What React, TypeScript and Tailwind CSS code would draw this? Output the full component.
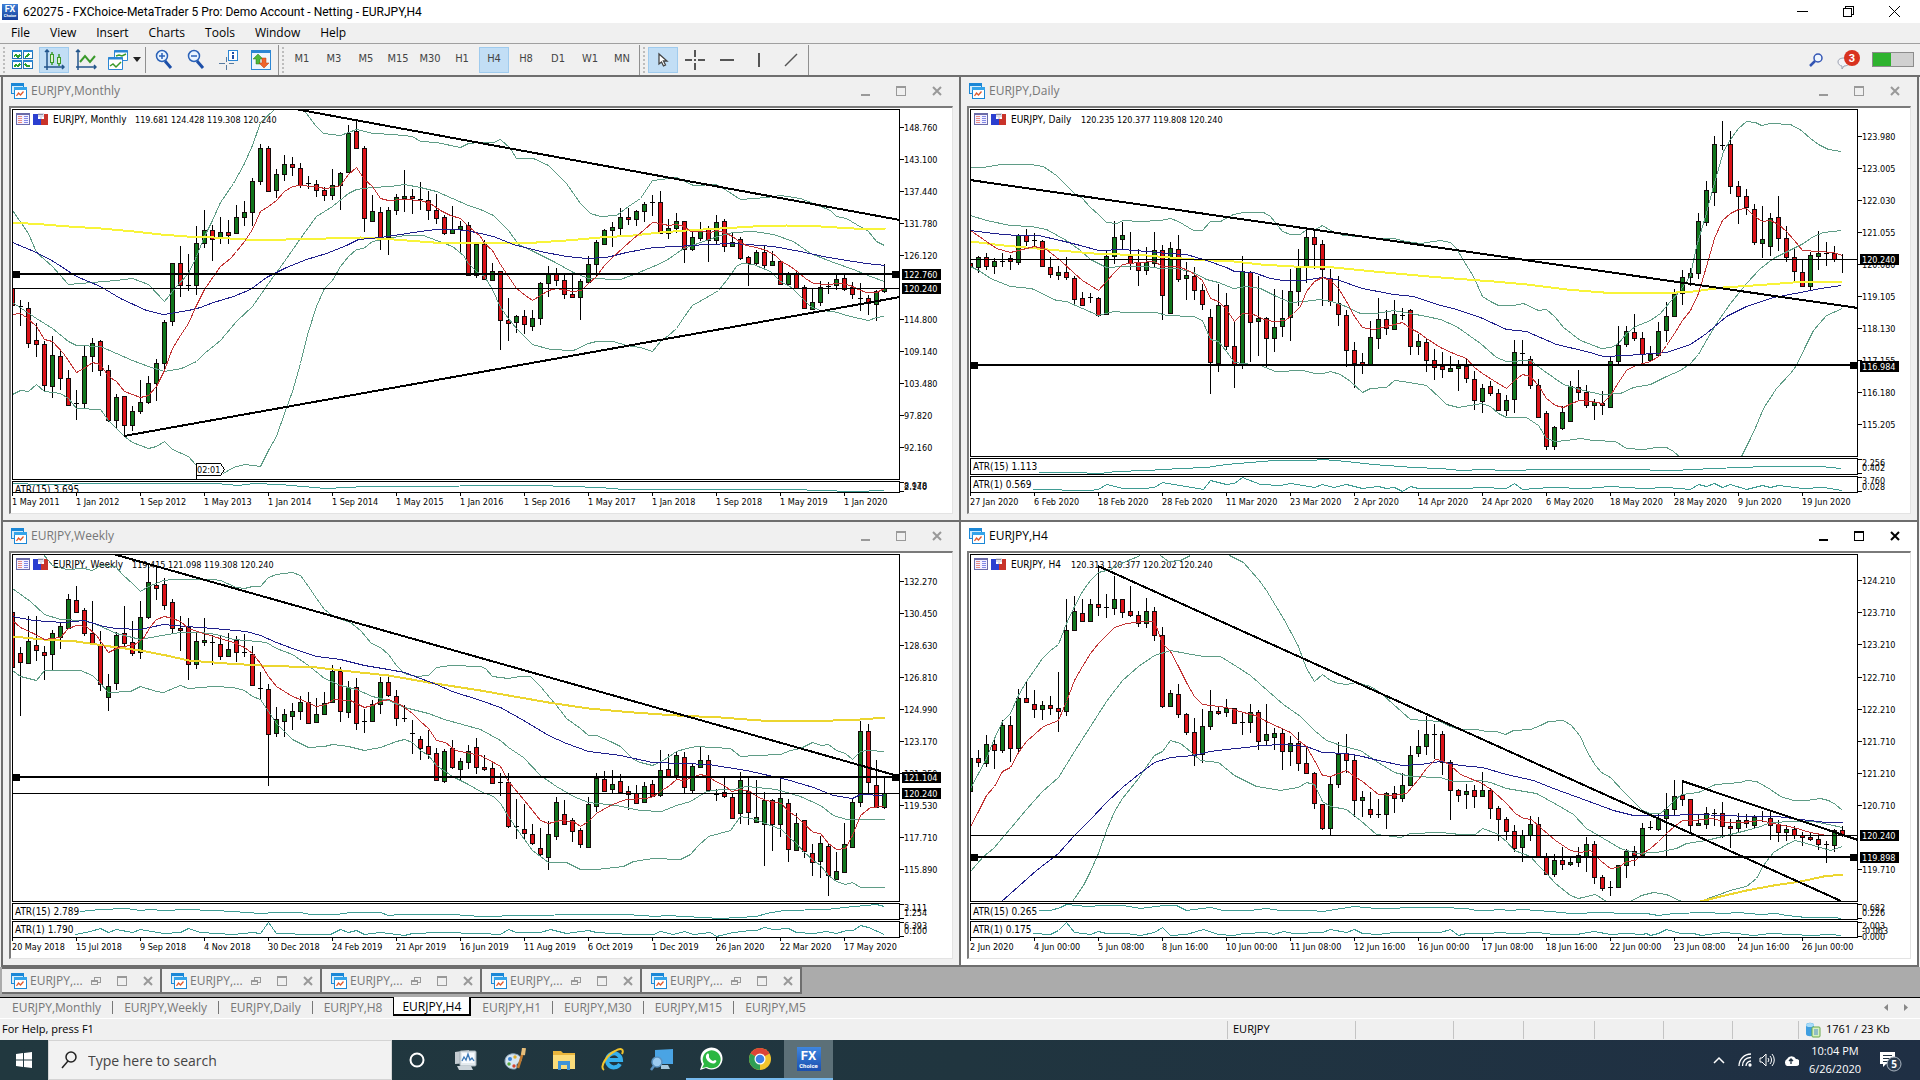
import React from "react";

type ChartSpec = {
  title: string;
  symbol: string;
  quote: string;
  quoteX: number;
  active?: boolean;
  ox: number;
  oy: number;
  candles: string;
  lines: { color: string; width: number; d: string[] }[];
  trends: [number, number, number, number][];
  thick: number;
  thin: number;
  plotBottom: number;
  panels: { top: number; bottom: number; label: string; d: string; values: [string, number][] }[];
  firstTick: number;
  prices: [string, number][];
  tags: [string, number][];
  dates: string[];
  timer?: string;
};

const GREEN = "#5f9c86";
const RED = "#c23434";
const BLUE = "#20208c";
const YELLOW = "#f8f43a";
const GOLD = "#ecd630";
const TEAL = "#3f9c94";

const monthly: ChartSpec = {
  title: "EURJPY,Monthly",
  symbol: "EURJPY, Monthly",
  quote: "119.681 124.428 119.308 120.240",
  quoteX: 124,
  ox: 11,
  oy: 28,
  candles: `626,626,676,676r 662,678,685,740d 667,685,790,806r 730,781,793,833r 783,793,916,938r 770,826,919,956g 812,829,895,930r 872,895,976,980r
  930,970,972,1020d 800,829,970,984g 774,790,829,876g 781,785,870,890r 857,871,1021,1028r 942,952,1021,1046g 949,949,1036,1066r 980,994,1036,1055g
  902,967,994,1004g 890,910,967,974g 838,850,910,965g 720,727,850,868g 550,550,724,740g 499,550,616,653r 524,616,619,634d 440,490,616,647g
  392,451,490,504g 436,451,478,545r 412,457,472,494g 420,457,466,492r 376,412,460,463g 365,397,412,440g 295,304,397,440g 193,205,304,317g
  200,205,334,334r 268,283,331,356g 226,253,283,304g 232,253,262,290r 250,265,316,325r 290,310,313,328d 302,314,331,352r 322,331,346,364r
  268,316,346,362g 277,280,316,391g 136,160,277,280g 122,154,205,208r 198,205,415,458r 345,394,424,426g 382,397,475,512r 382,391,472,526g
  342,352,391,406g 270,349,354,398g 328,349,356,403r 306,357,360,390d 334,361,391,422r 342,391,415,434r 406,412,460,466r 380,448,460,464g
  425,439,447,524g 427,436,586,590r 488,493,586,596g 480,493,598,600r 550,574,601,605g 574,574,721,812r 655,721,730,785r 706,710,727,760g
  690,710,733,764r 692,715,739,755g 606,610,715,737g 558,583,610,652g 565,583,601,620r 580,601,643,658r 583,643,652,655r 598,604,652,720g
  530,553,607,610g 481,487,553,590g 448,451,493,494g 428,442,451,503g 384,412,445,472g 385,412,418,437r 392,395,418,440g 367,374,394,426g
  347,367,370,410d 333,367,460,462r 418,445,460,478g 400,424,445,460g 424,424,508,550r 458,472,508,514g 427,448,475,484g 440,448,482,548r
  406,427,481,496g 418,424,499,517r 460,487,499,502g 473,478,536,540r 530,532,550,620r 511,517,550,560g 500,517,556,566r 514,544,556,560g
  540,544,613,614r 577,580,613,616g 577,583,625,628r 616,622,685,688r 628,667,688,692g 604,622,667,680g 607,619,622,643d 586,598,616,632g
  586,595,628,634r 608,622,643,658r 610,654,656,695d 647,655,670,706r 631,634,673,724g 552,626,635,640g`,
  lines: [
    {
      color: GREEN,
      width: 1,
      d: [
        "38,390 85,460 109,517 157,560 205,612 277,607 349,601 397,595 445,612 493,663 530,620 565,580 590,530 613,470 637,420 661,368 700,310 733,250 757,195 781,128 822,89",
        "910,89 945,135 970,160 1021,166 1069,148 1120,160 1180,164 1237,168 1261,184 1310,186 1381,202 1405,190 1440,188 1480,186 1501,178 1530,205 1550,235 1600,236 1645,255 1700,310 1740,370 1770,400 1800,409 1850,405 1885,380 1920,355 1957,302 1985,298 2030,292 2080,316 2150,313 2180,330 2220,357 2300,352 2340,346 2400,354 2440,370 2490,390 2510,410 2540,415 2570,432 2605,453 2630,485 2653,495",
        "38,668 109,716 157,745 205,785 229,796 300,798 349,820 397,842 445,860 493,873 545,865 590,843 613,820 661,780 709,725 757,680 805,610 853,545 901,475 950,410 997,380 1045,340 1069,328 1117,322 1170,320 1213,313 1260,322 1309,335 1357,355 1405,375 1440,387 1480,405 1525,450 1555,492 1600,515 1660,545 1720,578 1765,595 1860,597 1910,580 1960,560 2000,540 2050,505 2120,480 2160,467 2200,456 2260,453 2320,462 2380,485 2430,520 2500,548 2560,568 2610,590 2653,605",
        "38,942 61,930 85,935 109,913 133,933 181,941 205,956 229,985 300,988 325,1022 373,1070 397,1087 445,1105 470,1098 493,1083 517,1107 565,1130 590,1155",
        "670,1180 700,1162 733,1153 781,1160 805,1110 829,1070 853,1000 877,935 901,850 925,755 949,680 973,625 997,602 1021,560 1045,528 1069,508 1090,504 1117,485 1165,475 1213,465 1270,466 1309,480 1357,500 1390,525 1405,550 1430,575 1453,590 1478,627 1501,682 1525,715 1550,745 1597,793 1650,808 1720,811 1765,790 1790,784 1840,785 1880,797 1920,803 1957,815 1981,785 2005,765 2029,745 2053,710 2078,675 2125,650 2155,632 2180,600 2210,560 2225,550 2260,552 2310,575 2340,605 2375,622 2400,650 2430,680 2460,690 2500,695 2550,710 2605,721 2630,712 2653,708",
      ],
    },
    {
      color: YELLOW,
      width: 2,
      d: ["38,428 130,433 205,440 300,445 400,455 480,464 560,468 640,472 740,478 860,478 980,474 1080,473 1180,478 1300,486 1440,486 1610,486 1700,480 1800,473 1900,465 1980,457 2060,451 2160,445 2260,439 2360,437 2460,439 2560,446 2655,447"],
    },
    {
      color: BLUE,
      width: 1,
      d: ["38,487 110,517 160,545 230,588 300,618 360,655 440,692 490,703 530,697 565,692 600,682 640,668 700,650 750,627 800,593 860,562 920,538 980,521 1040,495 1075,478 1140,472 1200,464 1260,453 1310,448 1360,448 1400,452 1440,460 1480,468 1540,492 1620,515 1700,530 1760,536 1820,532 1880,518 1960,503 2030,498 2120,493 2200,490 2320,500 2400,514 2470,528 2540,542 2600,550 2655,557"],
    },
    {
      color: RED,
      width: 1,
      d: ["38,703 60,700 80,712 110,740 133,777 157,785 190,820 229,876 255,862 277,848 300,852 325,890 349,905 373,935 421,952 445,945 470,920 493,870 517,805 541,765 565,730 590,675 613,628 640,590 661,560 690,535 709,515 733,485 757,447 781,395 805,379 829,360 853,335 877,320 900,316 940,318 975,326 1000,322 1021,315 1045,283 1069,262 1093,298 1117,320 1141,355 1165,361 1213,358 1261,360 1290,370 1320,392 1350,406 1381,415 1405,440 1440,470 1453,490 1478,512 1500,552 1525,590 1550,625 1575,647 1597,660 1620,645 1645,630 1669,626 1695,632 1720,635 1745,630 1765,610 1790,590 1813,555 1840,530 1870,502 1900,475 1930,450 1957,427 1981,431 2005,437 2030,432 2053,438 2070,455 2100,455 2130,457 2150,452 2173,458 2197,468 2221,487 2240,495 2270,503 2300,512 2325,525 2345,545 2370,560 2395,578 2415,595 2440,610 2480,612 2520,609 2550,615 2575,628 2600,638 2630,636 2653,625"],
    },
  ],
  trends: [
    [885, 89, 2699, 420],
    [373, 1068, 2699, 653],
  ],
  thick: 582,
  thin: 625,
  plotBottom: 1198,
  panels: [
    {
      top: 1205,
      bottom: 1238,
      label: "ATR(15) 3.695",
      d: "38,1210 130,1212 300,1211 650,1209 715,1215 760,1210 840,1213 975,1225 1100,1219 1270,1218 1490,1217 1610,1217 1800,1222 1870,1227 2380,1228 2460,1231 2560,1235 2653,1231",
      values: [["8.978", 1218], ["2.140", 1221]],
    },
  ],
  firstTick: 37,
  prices: [["148.760", 142], ["143.100", 238], ["137.440", 334], ["131.780", 430], ["126.120", 526], ["114.800", 718], ["109.140", 814], ["103.480", 910], ["97.820", 1006], ["92.160", 1102]],
  tags: [["122.760", 583], ["120.240", 626]],
  dates: ["1 May 2011", "1 Jan 2012", "1 Sep 2012", "1 May 2013", "1 Jan 2014", "1 Sep 2014", "1 May 2015", "1 Jan 2016", "1 Sep 2016", "1 May 2017", "1 Jan 2018", "1 Sep 2018", "1 May 2019", "1 Jan 2020"],
  timer: "02:01",
};

const daily: ChartSpec = {
  title: "EURJPY,Daily",
  symbol: "EURJPY, Daily",
  quote: "120.235 120.377 119.808 120.240",
  quoteX: 112,
  ox: 9,
  oy: 28,
  candles: `550,550,562,562r 529,532,562,580g 520,532,559,572r 535,544,559,584g 520,544,546,562d 525,535,545,570r 463,466,547,556g 448,466,484,498r
  460,482,484,498d 480,484,559,562r 532,562,584,594r 560,577,586,602g 532,577,592,600r 588,595,658,674r 636,655,676,679r 640,653,655,670d
  652,655,706,712r 514,529,703,707g 424,472,529,553g 427,466,479,512g 457,529,550,572r 508,547,571,620r 503,547,571,587g 457,511,550,566g
  497,511,646,722r 487,505,700,703g 466,508,598,608r 547,586,596,660g 562,589,631,662r 614,631,673,690r 688,712,847,944r 612,676,850,878g
  640,676,799,811r 724,799,855,926r 529,574,856,868g 574,578,727,846r 590,715,724,830g 712,715,775,866r 628,742,775,818g 630,715,740,772g
  568,634,712,785g 508,560,634,680g 452,472,560,610g 455,472,494,568r 480,493,568,680r 568,595,664,680r 590,670,704,740r 690,706,811,862r
  787,811,850,924r 820,847,853,884r 724,772,856,858g 655,718,775,808g 690,718,745,767r 660,703,749,752g 685,706,708,721d 688,691,799,827r
  762,784,799,827g 775,787,841,878r 808,841,862,902r 817,859,868,894r 829,865,874,875g 841,859,865,935g 835,859,895,910r 875,898,961,991r
  912,925,964,1000g 903,919,940,950r 928,940,991,994r 946,961,991,1010g 780,817,958,1000g 780,820,822,856d 829,838,916,928r 898,916,1012,1014r
  994,1000,1099,1111r 1039,1042,1099,1111g 980,997,1045,1052g 905,919,1024,1027g 870,922,937,960r 915,937,976,986r 958,968,976,1022g 935,970,976,1007r
  830,844,982,984g 738,796,844,856g 738,754,793,802g 704,757,775,785r 758,775,823,856r 800,824,840,848g 726,754,826,830g 667,709,751,788g
  628,643,709,713g 570,592,640,675g 565,580,593,618g 400,424,580,598g 304,331,427,438g 169,193,338,380g 123,196,198,212d 153,193,319,344r
  304,319,349,432r 328,349,382,407r 373,388,487,497r 380,478,490,536g 400,415,500,530g 350,412,475,515r 438,475,532,548r 507,532,574,603r
  541,577,619,623r 517,526,619,630g 453,519,529,572g 487,520,521,560d 498,521,538,548r 524,537,539,580d`,
  lines: [
    {
      color: GREEN,
      width: 1,
      d: [
        "31,262 70,261 120,253 210,253 250,260 290,285 320,315 343,340 367,355 391,382 415,402 439,428 470,430 490,421 540,423 600,421 631,415 655,425 700,450 727,450 751,425 780,424 820,402 850,397 910,397 930,410 967,455 991,463 1020,463 1040,447 1065,448 1087,436 1111,452 1150,465 1200,468 1240,474 1300,476 1340,485 1380,490 1440,482 1470,488 1490,505 1510,540 1540,590 1567,648 1590,665 1615,676 1660,675 1690,670 1735,690 1760,687 1785,712 1810,742 1860,780 1925,805 1955,802 1975,790 2000,760 2025,738 2071,722 2100,700 2130,665 2160,630 2190,585 2210,500 2235,410 2260,320 2290,215 2310,178 2335,145 2360,123 2385,127 2405,136 2430,131 2490,132 2525,150 2550,175 2575,192 2605,208 2645,213",
        "31,405 80,422 150,435 215,438 260,448 320,480 360,510 391,538 439,562 490,560 560,560 600,566 650,565 700,577 740,597 775,607 820,625 860,620 900,625 950,650 990,666 1030,663 1080,657 1115,663 1150,675 1200,700 1250,700 1300,692 1350,700 1400,708 1440,718 1490,740 1560,790 1610,832 1640,845 1710,842 1750,870 1810,912 1870,930 1925,942 1980,940 2020,922 2071,912 2120,888 2160,870 2190,850 2215,822 2240,780 2270,730 2310,670 2360,610 2400,565 2440,535 2500,505 2530,490 2560,470 2590,458 2645,451",
        "31,560 60,575 90,595 151,619 215,625 290,660 319,664 367,685 415,706 460,695 500,698 590,697 620,707 700,710 727,722 751,777 775,785 799,815 823,848 900,856 945,874 1030,872 1063,880 1090,880 1111,873 1140,882 1170,905 1207,937 1230,925 1280,922 1303,901 1330,903 1399,917 1440,954 1460,972 1495,982 1530,975 1565,970 1590,980 1615,1000 1640,1013 1700,1013 1735,1035 1760,1075 1785,1085 1820,1080 1860,1075 1900,1080 1965,1085 2000,1105 2050,1108 2090,1103 2120,1103 2140,1115 2157,1129",
        "2344,1129 2370,1075 2390,1035 2410,985 2450,925 2490,880 2510,855 2535,800 2560,750 2600,705 2647,684",
      ],
    },
    {
      color: YELLOW,
      width: 2,
      d: ["31,485 130,497 230,505 400,520 560,527 700,538 820,545 900,553 1000,558 1120,563 1240,575 1440,592 1600,605 1700,613 1820,628 1930,636 2150,637 2200,633 2290,623 2380,615 2500,608 2647,605"],
    },
    {
      color: BLUE,
      width: 1,
      d: ["31,450 100,460 170,467 235,466 300,480 360,497 415,511 490,509 560,515 620,520 680,522 740,540 800,562 823,575 880,577 930,596 970,602 1030,602 1087,592 1130,597 1207,625 1300,642 1360,648 1440,676 1480,685 1560,712 1640,748 1700,753 1790,793 1880,815 1930,830 2000,826 2120,818 2190,793 2240,760 2300,708 2360,680 2440,652 2520,638 2580,626 2645,615"],
    },
    {
      color: RED,
      width: 1,
      d: ["31,450 79,484 110,505 151,518 199,505 223,498 260,507 300,540 343,580 367,600 415,630 439,603 463,577 487,553 535,547 583,545 607,560 655,560 690,575 727,602 751,655 775,663 799,687 823,725 847,700 880,702 920,720 945,724 975,720 1000,700 1020,680 1040,635 1063,603 1087,593 1111,600 1135,625 1159,665 1183,710 1207,742 1240,747 1279,740 1327,728 1351,745 1375,757 1399,775 1440,803 1480,820 1520,835 1543,862 1567,880 1600,900 1640,925 1663,900 1688,883 1711,888 1735,915 1759,955 1785,975 1810,982 1835,970 1859,960 1890,965 1927,970 1950,945 1975,908 2000,872 2025,855 2071,845 2095,830 2119,797 2143,760 2167,720 2191,690 2215,640 2240,560 2263,475 2287,420 2311,400 2335,387 2359,385 2383,408 2407,424 2431,422 2455,432 2479,455 2503,482 2527,510 2575,515 2620,517 2647,525"],
    },
  ],
  trends: [[31, 302, 2692, 684]],
  thick: 857,
  thin: 538,
  plotBottom: 1129,
  panels: [
    {
      top: 1136,
      bottom: 1183,
      label: "ATR(15) 1.113",
      d: "235,1178 340,1178 420,1181 470,1175 560,1172 660,1164 740,1161 800,1152 870,1146 940,1141 1050,1141 1090,1138 1160,1144 1240,1153 1360,1161 1440,1165 1500,1170 1570,1167 1640,1171 1760,1168 2000,1168 2140,1170 2260,1165 2420,1160 2580,1160 2645,1165",
      values: [["2.256", 1149], ["0.402", 1166]],
    },
    {
      top: 1190,
      bottom: 1238,
      label: "ATR(1) 0.569",
      d: "220,1228 390,1231 415,1228 439,1213 490,1224 550,1226 583,1222 607,1207 640,1213 730,1227 751,1200 800,1213 823,1209 847,1192 900,1212 960,1217 991,1210 1063,1222 1087,1213 1120,1221 1159,1213 1207,1226 1255,1219 1279,1226 1303,1223 1327,1234 1351,1219 1375,1226 1440,1226 1520,1226 1560,1222 1640,1226 1663,1211 1687,1227 1770,1222 1880,1224 1950,1219 2050,1226 2120,1222 2190,1228 2215,1214 2240,1218 2263,1211 2287,1223 2311,1213 2359,1227 2407,1217 2431,1221 2455,1216 2530,1225 2590,1222 2647,1231",
      values: [["3.760", 1203], ["0.028", 1221]],
    },
  ],
  firstTick: 31,
  prices: [["123.980", 169], ["123.005", 265], ["122.030", 361], ["121.055", 457], ["120.080", 553], ["119.105", 649], ["118.130", 745], ["117.155", 841], ["116.180", 937], ["115.205", 1033]],
  tags: [["120.240", 538], ["116.984", 859]],
  dates: ["27 Jan 2020", "6 Feb 2020", "18 Feb 2020", "28 Feb 2020", "11 Mar 2020", "23 Mar 2020", "2 Apr 2020", "14 Apr 2020", "24 Apr 2020", "6 May 2020", "18 May 2020", "28 May 2020", "9 Jun 2020", "19 Jun 2020"],
};

const weekly: ChartSpec = {
  title: "EURJPY,Weekly",
  symbol: "EURJPY, Weekly",
  quote: "119.415 121.098 119.308 120.240",
  quoteX: 121,
  ox: 11,
  oy: 33,
  candles: `278,278,442,445r 382,400,427,590r 288,364,430,434g 288,376,391,424r 380,397,406,482r 332,340,403,455g 310,319,352,388g 222,238,325,328g
  198,241,277,278r 264,271,340,350r 244,340,373,376r 335,373,493,515r 462,499,532,575g 337,346,490,512g 258,340,370,380r 304,367,400,410r
  243,292,397,418g 130,187,292,298g 140,196,205,242r 175,193,256,272r 238,247,325,344r 289,325,331,395r 294,322,433,482r 337,364,433,448g
  295,361,367,380g 346,367,370,436d 350,373,409,420r 340,388,409,412g 348,361,397,427r 343,398,400,412d 380,403,496,496r 457,506,508,538d
  492,508,643,800r 562,598,640,653g 568,583,604,653g 550,574,589,632g 529,547,574,602g 516,547,610,612r 535,583,607,610g 517,550,583,586g
  436,454,547,550g 442,454,574,608r 484,502,577,596g 474,502,610,632r 568,604,606,641d 540,553,604,606g 472,487,553,582g 472,487,526,532r
  510,529,595,618r 556,596,598,608d 602,640,642,702d 650,658,685,722r 632,679,703,718r 684,700,781,785r 688,694,784,790g 662,685,742,748r
  716,724,748,782g 676,694,727,748g 655,682,742,762r 707,742,748,754r 730,745,790,792r 760,788,790,830d 760,787,919,924r 838,920,922,957d
  852,928,940,962r 912,943,970,977r 926,985,1003,1012r 903,943,1012,1050g 832,847,949,962g 840,883,913,916r 894,901,934,968r 925,931,973,986r
  832,853,982,986g 760,775,859,878g 754,778,814,816r 752,793,808,820g 762,784,818,824r 800,814,823,872r 796,820,850,853r 788,799,847,850g
  780,793,829,833r 690,751,826,832g 704,748,770,772r 698,706,766,778g 698,712,802,824r 730,739,811,822g 682,721,742,744g 706,721,811,814r
  808,822,825,845d 772,817,829,835r 820,832,895,898r 757,781,880,914g 770,814,877,916r 780,892,907,910g 817,841,913,1038g 838,841,913,995r
  772,835,913,952g 838,850,988,1026r 880,910,991,994g 900,901,994,1014r 974,1000,1027,1068r 950,970,1024,1075g 974,979,1066,1128r 998,1054,1078,1082g
  910,973,1057,1058g 834,847,982,986g 604,634,847,862g 614,634,787,821r 720,796,862,865r 772,821,862,869g`,
  lines: [
    {
      color: GREEN,
      width: 1,
      d: [
        "130,103 157,135 200,147 250,146 277,150 300,137 345,140 370,165 397,190 421,215 445,198 490,180 517,177 565,178 640,178 662,180 709,202 733,206 757,199 781,198 805,173 830,163 877,156 901,167 925,198 949,235 973,268 1000,288 1050,308 1080,330 1115,370 1141,383 1165,403 1190,435 1213,460 1250,470 1285,465 1310,443 1350,437 1440,440 1455,445 1478,468 1525,475 1560,468 1590,470 1620,498 1650,535 1680,570 1700,595 1740,625 1765,645 1790,647 1830,665 1860,680 1900,718 1920,726 1957,737 1990,722 2030,693 2060,684 2090,680 2190,685 2222,709 2270,705 2340,704 2370,690 2400,685 2437,668 2465,676 2485,673 2510,690 2535,700 2557,717 2580,695 2605,692 2653,694",
        "38,205 90,245 133,282 180,298 250,300 290,312 349,340 421,357 470,350 541,338 600,338 650,343 700,357 740,360 800,367 829,385 877,403 925,437 973,475 1021,497 1069,508 1117,530 1165,540 1213,562 1285,580 1333,597 1440,627 1500,660 1525,682 1570,712 1620,765 1670,800 1720,830 1765,846 1850,857 1920,872 1985,873 2030,857 2070,843 2120,813 2165,808 2200,808 2240,800 2330,808 2400,830 2460,857 2500,885 2540,898 2653,899",
        "38,450 60,468 109,482 133,452 240,452 277,465 300,490 325,518 390,515 421,498 470,515 490,517 541,497 565,505 640,500 700,502 733,512 757,530 781,537 805,575 829,610 877,657 925,682 973,680 997,673 1045,680 1093,691 1141,683 1190,663 1213,658 1237,667 1261,690 1285,707 1309,737 1357,770 1400,790 1440,815 1480,828 1501,850 1525,890 1550,925 1597,992 1645,1027 1700,1027 1740,1048 1790,1048 1870,1038 1900,1025 1960,1015 2040,1018 2070,1002 2095,975 2125,950 2190,930 2222,888 2265,897 2310,915 2345,928 2370,955 2390,970 2413,997 2440,1020 2462,1035 2485,1065 2510,1085 2535,1093 2557,1087 2582,1102 2653,1102",
      ],
    },
    {
      color: GOLD,
      width: 2,
      d: ["38,350 130,358 229,365 330,378 420,392 500,405 565,420 680,429 781,436 950,442 1050,453 1165,467 1285,487 1440,512 1525,527 1645,548 1765,564 1900,577 2030,586 2160,592 2280,600 2400,603 2500,601 2580,598 2655,591"],
    },
    {
      color: BLUE,
      width: 1,
      d: ["38,290 100,300 190,306 253,300 310,318 350,325 421,327 490,313 560,318 640,325 740,335 781,347 829,368 877,385 950,410 1021,418 1093,437 1165,447 1213,458 1261,475 1309,493 1357,513 1440,540 1501,563 1575,605 1645,645 1700,670 1765,695 1860,706 1957,727 2050,729 2125,733 2240,752 2360,777 2440,803 2500,827 2557,836 2580,823 2653,826"],
    },
    {
      color: RED,
      width: 1,
      d: ["38,300 60,322 100,340 133,357 180,352 205,325 229,315 260,318 290,345 325,397 360,378 400,375 430,355 450,318 470,298 493,288 517,295 541,303 565,325 600,337 640,350 700,366 733,382 757,400 781,430 805,470 829,500 877,530 901,537 950,558 980,553 1000,538 1050,540 1093,562 1117,555 1141,545 1165,537 1200,553 1237,580 1261,605 1285,625 1309,660 1335,668 1365,690 1440,705 1480,727 1501,740 1525,785 1573,840 1597,872 1621,900 1645,910 1680,900 1720,905 1741,920 1765,905 1790,880 1830,855 1860,845 1880,838 1940,836 1960,828 1985,810 2005,800 2030,778 2050,780 2101,763 2125,770 2145,785 2173,795 2195,815 2220,808 2250,815 2270,830 2300,842 2343,850 2365,875 2390,890 2413,912 2440,937 2460,940 2485,970 2510,988 2535,985 2557,945 2580,885 2610,862 2653,858"],
    },
  ],
  trends: [[340, 103, 2692, 768]],
  thick: 771,
  thin: 821,
  plotBottom: 1143,
  panels: [
    {
      top: 1151,
      bottom: 1197,
      label: "ATR(15) 2.789",
      d: "240,1174 300,1169 380,1165 421,1172 450,1168 490,1172 560,1168 640,1170 700,1175 781,1180 830,1177 900,1178 930,1183 1010,1182 1050,1177 1140,1177 1165,1185 1200,1184 1360,1184 1440,1190 1570,1187 1760,1184 1880,1184 1970,1190 2000,1187 2160,1194 2270,1188 2300,1180 2350,1172 2480,1168 2560,1160 2600,1156 2630,1154 2653,1160",
      values: [["3.111", 1165], ["1.254", 1181]],
    },
    {
      top: 1205,
      bottom: 1252,
      label: "ATR(1) 1.790",
      d: "225,1244 270,1235 301,1224 325,1238 349,1228 397,1238 421,1228 490,1240 541,1238 565,1224 600,1238 700,1244 757,1237 781,1240 805,1206 829,1240 940,1242 990,1242 1021,1227 1045,1238 1069,1231 1093,1242 1141,1237 1213,1245 1237,1240 1320,1237 1440,1240 1500,1242 1525,1229 1550,1238 1620,1238 1650,1229 1700,1241 1765,1231 1790,1237 1890,1243 1960,1243 1981,1234 2020,1244 2053,1235 2080,1242 2130,1236 2150,1248 2200,1238 2250,1230 2270,1232 2293,1222 2320,1229 2365,1225 2390,1237 2440,1240 2480,1234 2510,1240 2540,1231 2560,1231 2582,1216 2605,1222 2653,1242",
      values: [["6.393", 1218], ["0.100", 1235]],
    },
  ],
  firstTick: 37,
  prices: [["132.270", 184], ["130.450", 280], ["128.630", 376], ["126.810", 472], ["124.990", 568], ["123.170", 664], ["121.350", 760], ["119.530", 856], ["117.710", 952], ["115.890", 1048]],
  tags: [["121.104", 773], ["120.240", 821]],
  dates: ["20 May 2018", "15 Jul 2018", "9 Sep 2018", "4 Nov 2018", "30 Dec 2018", "24 Feb 2019", "21 Apr 2019", "16 Jun 2019", "11 Aug 2019", "6 Oct 2019", "1 Dec 2019", "26 Jan 2020", "22 Mar 2020", "17 May 2020"],
};

const h4: ChartSpec = {
  title: "EURJPY,H4",
  symbol: "EURJPY, H4",
  quote: "120.313 120.377 120.202 120.240",
  quoteX: 102,
  active: true,
  ox: 9,
  oy: 33,
  candles: `715,715,814,814g 690,715,727,742r 646,673,730,742g 660,673,691,749r 600,616,691,700g 590,616,685,728r 508,535,685,697g 484,535,547,550r
  510,553,568,596r 545,556,569,600g 528,556,565,587r 456,565,574,638r 238,331,574,590g 228,274,331,332g 237,280,304,306r 237,253,304,308g
  140,253,262,290r 222,262,264,296d 170,238,265,287g 238,238,277,296r 198,274,287,292r 274,286,310,322r 234,274,310,326g 262,274,346,364r
  322,346,559,566r 510,520,559,563g 492,523,583,594r 580,583,637,646r 595,637,706,740r 568,619,703,731g 510,574,619,632g 562,573,580,587r
  537,565,577,592g 565,565,610,611r 580,607,609,647d 552,577,607,641g 572,577,664,690r 552,643,661,676g 625,640,653,690g 628,640,694,750r
  650,670,694,738g 637,670,730,754r 680,730,760,764r 758,760,850,869r 852,853,925,930r 770,793,925,945g 667,703,793,806g 642,700,721,761r
  706,721,841,892r 814,832,841,892g 817,868,883,894r 838,882,884,896d 817,820,883,929g 800,820,835,879r 760,796,835,848g 678,706,796,800g
  632,679,700,712g 590,643,679,707g 613,643,645,718d 634,643,727,766r 722,727,811,902r 808,811,826,848r 794,814,823,869g 796,811,829,866r
  757,811,829,833g 806,811,865,899r 860,865,898,965r 892,898,934,962r 917,934,985,998r 932,946,983,1028g 888,913,946,965g 893,913,1012,1014r
  1000,1012,1063,1067r 1004,1021,1063,1073g 983,1021,1033,1052r 1012,1026,1033,1039g 983,1006,1028,1042g 952,973,1010,1058g 965,973,1073,1094r 1066,1073,1105,1114r
  1084,1102,1104,1128d 1036,1036,1102,1104g 988,994,1036,1076g 980,994,1007,1040r 910,925,1007,1012g 904,922,924,932d 883,895,928,935g 820,868,895,1010g
  780,829,868,890g 787,826,838,860r 838,838,916,940r 887,910,916,920g 862,880,913,929g 868,880,882,920d 847,880,919,955r 897,919,925,986r
  880,901,925,940g 884,901,910,925r 886,892,916,925g 874,890,893,907d 875,895,916,960r 902,914,937,968r 916,928,937,965g 920,928,946,958r
  936,946,952,980r 936,952,958,965r 946,958,973,992r 964,972,975,1031d 928,931,976,998g 920,931,946,952r`,
  lines: [
    {
      color: GREEN,
      width: 1,
      d: [
        "31,805 79,715 103,655 127,603 151,580 175,525 199,485 247,415 271,392 295,373 319,310 343,260 367,215 391,182 415,158 450,148 490,128 540,105",
        "600,105 625,124 660,121 690,105",
        "808,105 850,128 870,150 895,178 920,210 945,255 970,295 991,335 1015,380 1040,445 1063,485 1087,463 1111,482 1135,490 1160,493 1190,487 1230,498 1265,520 1300,552 1351,597 1440,605 1470,618 1500,627 1550,628 1580,634 1610,635 1636,643 1660,630 1710,628 1740,615 1765,603 1810,601 1835,615 1860,650 1880,690 1905,735 1925,757 1950,772 1990,815 2020,845 2047,870 2070,880 2100,880 2120,865 2143,840 2165,822 2215,818 2265,793 2340,788 2360,781 2390,783 2430,808 2460,828 2500,842 2540,842 2580,834 2605,840 2625,853 2647,870",
        "31,1055 70,1010 100,985 151,925 199,868 247,815 295,772 343,695 391,620 439,545 487,480 535,440 583,405 631,391 680,400 730,409 780,409 829,440 871,467 925,515 970,552 1020,590 1063,632 1100,662 1150,680 1200,692 1250,725 1303,757 1351,770 1440,772 1480,785 1520,785 1560,780 1590,787 1640,806 1730,820 1790,852 1840,882 1880,925 1930,955 1980,985 2030,1000 2090,998 2150,985 2180,970 2240,960 2300,945 2360,930 2400,918 2430,907 2500,904 2560,905 2605,913 2647,923",
        "337,1143 370,1095 390,1055 415,1000 439,930 463,875 487,835 535,775 560,740 583,705 607,695 631,660 660,670 690,695 720,720 775,727 823,765 890,800 960,810 1015,803 1040,787 1063,792 1087,845 1111,860 1160,868 1200,900 1250,942 1320,952 1350,940 1440,938 1500,944 1545,944 1567,925 1610,940 1640,965 1663,992 1710,1010 1735,1035 1760,1060 1785,1090 1830,1125 1855,1135 1905,1122 1940,1143",
        "2010,1143 2045,1125 2080,1117 2120,1122 2165,1143",
        "2220,1143 2260,1130 2320,1108 2360,1100 2390,1075 2410,1035 2440,998 2480,972 2505,960 2540,970 2580,983 2610,990 2647,978",
      ],
    },
    {
      color: GOLD,
      width: 2,
      d: ["2220,1143 2280,1128 2360,1112 2440,1097 2520,1083 2590,1070 2650,1063"],
    },
    {
      color: BLUE,
      width: 1,
      d: ["123,1143 175,1100 230,1050 295,1000 343,945 391,897 439,848 487,803 535,762 583,728 631,712 700,705 751,694 800,687 860,682 900,676 970,674 1040,680 1087,697 1160,700 1207,710 1255,722 1327,737 1380,733 1440,723 1500,735 1567,743 1640,762 1720,782 1780,805 1880,840 1960,872 2020,885 2120,886 2200,883 2300,886 2360,890 2450,890 2520,897 2600,907 2647,908"],
    },
    {
      color: RED,
      width: 1,
      d: ["31,920 55,875 79,827 103,800 127,755 151,742 175,697 199,665 250,620 295,600 319,545 343,480 367,440 391,400 415,370 463,322 500,309 550,304 583,303 607,370 631,395 655,440 679,487 703,530 727,552 800,562 850,578 885,585 920,605 990,637 1015,660 1039,680 1063,720 1087,765 1111,770 1159,750 1183,768 1207,785 1255,823 1300,825 1340,820 1375,778 1400,745 1425,718 1447,720 1470,735 1500,762 1567,790 1600,815 1640,850 1665,880 1690,895 1715,897 1745,925 1785,960 1830,990 1860,998 1890,992 1925,1025 1950,1045 1975,1043 2000,1025 2025,1020 2047,1000 2071,985 2095,965 2119,940 2143,920 2167,900 2200,902 2260,895 2300,907 2350,908 2400,900 2440,910 2500,922 2550,938 2600,947 2647,945"],
    },
  ],
  trends: [
    [415, 140, 2640, 1143],
    [2167, 785, 2692, 960],
  ],
  thick: 1011,
  thin: 946,
  plotBottom: 1143,
  panels: [
    {
      top: 1151,
      bottom: 1197,
      label: "ATR(15) 0.265",
      d: "235,1171 270,1171 300,1163 319,1153 380,1160 430,1157 490,1157 540,1165 610,1157 650,1157 680,1171 750,1162 790,1170 870,1171 919,1165 960,1171 1050,1171 1087,1174 1183,1160 1250,1164 1290,1165 1350,1162 1440,1162 1520,1165 1550,1171 1590,1171 1614,1168 1650,1171 1687,1168 1770,1175 1835,1181 1930,1177 1990,1180 2060,1181 2095,1187 2140,1179 2240,1177 2290,1179 2335,1177 2400,1183 2450,1180 2480,1186 2540,1191 2620,1192 2645,1196",
      values: [["0.682", 1165], ["0.226", 1181]],
    },
    {
      top: 1205,
      bottom: 1252,
      label: "ATR(1) 0.175",
      d: "220,1241 270,1243 295,1231 319,1206 343,1237 390,1243 415,1235 440,1240 500,1240 540,1245 583,1238 607,1223 631,1245 680,1242 730,1229 775,1243 820,1246 850,1240 919,1236 940,1242 970,1235 1000,1241 1087,1237 1111,1227 1160,1238 1183,1228 1207,1240 1255,1244 1300,1238 1440,1237 1471,1228 1495,1246 1520,1240 1590,1241 1614,1237 1660,1241 1735,1237 1780,1242 1850,1243 1903,1235 1950,1244 2000,1240 2047,1244 2060,1240 2071,1247 2095,1241 2119,1228 2160,1240 2200,1239 2225,1246 2290,1237 2330,1241 2380,1246 2430,1240 2500,1243 2550,1246 2610,1242 2645,1246",
      values: [["2.003", 1219], ["-0.063", 1235], ["0.000", 1251]],
    },
  ],
  firstTick: 31,
  prices: [["124.210", 181], ["123.710", 277], ["123.210", 373], ["122.710", 472], ["122.210", 568], ["121.710", 664], ["121.210", 760], ["120.710", 856], ["119.710", 1048]],
  tags: [["120.240", 946], ["119.898", 1013]],
  dates: ["2 Jun 2020", "4 Jun 00:00", "5 Jun 08:00", "8 Jun 16:00", "10 Jun 00:00", "11 Jun 08:00", "12 Jun 16:00", "16 Jun 00:00", "17 Jun 08:00", "18 Jun 16:00", "22 Jun 00:00", "23 Jun 08:00", "24 Jun 16:00", "26 Jun 00:00"],
};

const PLOT_LEFT = 1;
const PLOT_RIGHT = 888;

/* Series are stored in thirds of a pixel; px() and py() snap them to whole pixels. */
function PriceChart({ spec }: { spec: ChartSpec }) {
  const px = (v: number) => Math.floor(v / 3) - spec.ox;
  const py = (v: number) => Math.floor(v / 3) - spec.oy;
  const path = (s: string) =>
    s
      .trim()
      .split(/\s+/)
      .map((p) => {
        const [a, b] = p.split(",").map(Number);
        return `${px(a) + 0.5},${py(b) + 0.5}`;
      })
      .join(" ");
  const candles = spec.candles
    .trim()
    .split(/\s+/)
    .map((c, i) => {
      const n = c.slice(0, -1).split(",").map((v) => py(Number(v)));
      return { x: px(spec.firstTick + i * 24), hi: n[0], top: n[1], bot: n[2], lo: n[3], kind: c.slice(-1) };
    });
  const bottom = py(spec.plotBottom);
  const axisY = py(spec.panels[spec.panels.length - 1].bottom);
  const id = spec.title.replace(",", "-");

  return (
    <svg className="block h-[405px] w-full font-['DejaVu_Sans_Condensed','DejaVu_Sans',sans-serif] text-[9px]" shapeRendering="crispEdges" role="img" aria-label={`${spec.title} price chart`}>
      <defs>
        <clipPath id={id}>
          <rect x={PLOT_LEFT} y={1} width={PLOT_RIGHT - PLOT_LEFT} height={bottom - 1} />
        </clipPath>
        {spec.panels.map((p, i) => (
          <clipPath key={i} id={`${id}-${i}`}>
            <rect x={PLOT_LEFT} y={py(p.top)} width={PLOT_RIGHT - PLOT_LEFT} height={py(p.bottom) - py(p.top)} />
          </clipPath>
        ))}
      </defs>

      <g transform="translate(5 5)">
        <rect x="0" y="0" width="14" height="12" rx="1" fill="#6a6aa8" />
        <rect x="1" y="2" width="12" height="9" fill="#f4f0ff" />
        <path d="M2 3.500h4M2 5.500h4M2 7.500h4M2 9.500h4" stroke="#e88a84" />
        <path d="M8 3.500h4M8 5.500h4M8 7.500h4M8 9.500h4" stroke="#8088e4" />
        <path d="M17 1h5v5h3v6h-8z" fill="#2b3fd0" />
        <path d="M32 1h-4v5h-3v6h7z" fill="#c9332a" />
        <path d="M22 0h6v4h-2v2h-2v-2h-2z" fill="#dcdce8" />
        <path d="M22 1.500h5" stroke="#8a8aa0" />
      </g>
      <text x={42} y={15} className="text-[10px]">{spec.symbol}</text>
      <text x={spec.quoteX} y={15}>{spec.quote}</text>

      <g clipPath={`url(#${id})`}>
        {candles.map((c, i) => (
          <g key={i}>
            <rect x={c.x} y={c.hi} width={1} height={Math.max(1, c.lo - c.hi)} fill="#000" />
            {c.kind === "d" ? (
              <rect x={c.x - 2} y={c.top} width={5} height={1} fill="#000" />
            ) : (
              <>
                <rect x={c.x - 2} y={c.top} width={5} height={Math.max(3, c.bot - c.top + 1)} fill="#140a0a" />
                <rect x={c.x - 1} y={c.top + 1} width={3} height={Math.max(1, c.bot - c.top - 1)} fill={c.kind === "g" ? "#10761c" : "#dc1218"} />
              </>
            )}
          </g>
        ))}
        {spec.lines.map((l) => l.d.map((d, i) => <polyline key={l.color + i} points={path(d)} fill="none" stroke={l.color} strokeWidth={l.width} />))}
        <rect x={PLOT_LEFT} y={py(spec.thin)} width={PLOT_RIGHT} height={1} fill="#000" />
        <rect x={PLOT_LEFT} y={py(spec.thick) - 1} width={PLOT_RIGHT} height={2} fill="#000" />
        <rect x={PLOT_LEFT} y={py(spec.thick) - 3} width={8} height={7} fill="#000" />
        <rect x={PLOT_RIGHT - 7} y={py(spec.thick) - 3} width={8} height={7} fill="#000" />
        {spec.trends.map((t, i) => (
          <line key={i} x1={px(t[0])} y1={py(t[1])} x2={px(t[2]) + 1} y2={py(t[3])} stroke="#000" strokeWidth={2} />
        ))}
      </g>
      {spec.timer && (
        <g>
          <path d={`M${px(589)}.5 ${bottom}V${py(1150)}.5h24l4 6l-4 6h-24`} fill="#fff" stroke="#000" />
          <text x={px(593)} y={py(1181)}>{spec.timer}</text>
        </g>
      )}

      <rect x={PLOT_LEFT + 0.5} y={1.5} width={PLOT_RIGHT - PLOT_LEFT} height={bottom - 1} fill="none" stroke="#000" />
      {spec.panels.map((p, i) => {
        const t = py(p.top);
        const b = py(p.bottom);
        return (
          <g key={i}>
            <g clipPath={`url(#${id}-${i})`}>
              <polyline points={path(p.d)} fill="none" stroke={TEAL} />
              <text x={4} y={t + 12} className="text-[10px]">{p.label}</text>
            </g>
            <rect x={PLOT_LEFT + 0.5} y={t + 0.5} width={PLOT_RIGHT - PLOT_LEFT} height={b - t} fill="none" stroke="#000" />
            <path d={`M${PLOT_RIGHT} ${t + 1}.5h5M${PLOT_RIGHT} ${b - 1}.5h5`} stroke="#000" />
            {p.values.map(([v, y]) => (
              <text key={v} x={893} y={py(y) + 3}>{v}</text>
            ))}
          </g>
        );
      })}

      {spec.prices.map(([label, y]) => (
        <g key={label}>
          <rect x={PLOT_RIGHT} y={py(y)} width={5} height={1} />
          <text x={893} y={py(y) + 4}>{label}</text>
        </g>
      ))}
      {spec.tags.map(([label, y]) => (
        <g key={label}>
          <rect x={891} y={py(y) - 5} width={39} height={11} />
          <text x={893} y={py(y) + 4} fill="#fff">{label}</text>
        </g>
      ))}
      {spec.dates.map((label, i) => (
        <g key={label}>
          <rect x={PLOT_LEFT + i * 64} y={axisY} width={1} height={4} />
          <text x={PLOT_LEFT + i * 64} y={axisY + 13}>{label}</text>
        </g>
      ))}
    </svg>
  );
}

function ChartIcon() {
  return (
    <svg className="size-4 shrink-0" viewBox="0 0 16 16" aria-hidden="true">
      <rect x="0.5" y="0.5" width="12" height="10" fill="#d5ecfa" stroke="#1b87d6" />
      <rect x="0" y="0" width="13" height="3" fill="#1b87d6" />
      <rect x="3.500" y="4.500" width="12" height="11" fill="#fff" stroke="#1b87d6" />
      <rect x="3" y="4" width="13" height="3" fill="#35a4ea" />
      <path d="M5.500 13l2-3l2 2l3-3.500" fill="none" stroke="#e0592c" strokeWidth="1.300" />
    </svg>
  );
}

function WindowButtons({ restore, tone, gap }: { restore?: boolean; tone: string; gap: string }) {
  return (
    <div className={`flex items-center ${gap} ${tone}`}>
      <button aria-label={restore ? "Restore" : "Minimize"} className="flex size-3 items-center justify-center">
        <svg viewBox="0 0 12 12" className="size-3" fill="none" stroke="currentColor" shapeRendering="crispEdges">
          {restore ? <path d="M1.500 5.500h6v4h-6zM1 6.500h7M4.500 5v-3h6v5h-3" /> : <path d="M2 10h9" strokeWidth="2" />}
        </svg>
      </button>
      <button aria-label="Maximize" className="flex size-3 items-center justify-center">
        <svg viewBox="0 0 12 12" className="size-3" fill="none" stroke="currentColor" shapeRendering="crispEdges">
          <path d="M1.500 1.500h9v9h-9zM1 2h10" />
        </svg>
      </button>
      <button aria-label="Close" className="flex size-3 items-center justify-center">
        <svg viewBox="0 0 12 12" className="size-3" fill="none" stroke="currentColor" strokeWidth="2">
          <path d="M2 2l8 8M10 2l-8 8" />
        </svg>
      </button>
    </div>
  );
}

function ChartWindow({ spec }: { spec: ChartSpec }) {
  return (
    <section className={`border-r-2 border-b-2 border-[#6e6e6e] pr-[6px] pb-[6px] pl-[6px] ${spec.active ? "bg-white" : "bg-[#f0f0f0]"}`}>
      <header className="flex h-[29px] items-center justify-between pr-[10px] pb-[2px] pl-[2px]">
        <div className={`flex items-center gap-1 text-[12px] ${spec.active ? "text-black" : "text-[#777]"}`}>
          <ChartIcon />
          <h2>{spec.title}</h2>
        </div>
        <WindowButtons tone={spec.active ? "text-black" : "text-[#999]"} gap="gap-6" />
      </header>
      <div className="overflow-hidden border-t-2 border-r border-b border-l-2 border-t-[#7a7a7a] border-r-[#e3e3e3] border-b-[#e3e3e3] border-l-[#7a7a7a] bg-white">
        <PriceChart spec={spec} />
      </div>
    </section>
  );
}

function Grip() {
  return <div className="mr-[2px] ml-[3px] h-[26px] w-[2px] border-l-2 border-dotted border-[#bdbdbd]" />;
}

function ToolButton({ label, active, children }: { label: string; active?: boolean; children: React.ReactNode }) {
  return (
    <button aria-label={label} className={`flex h-[26px] w-[30px] shrink-0 items-center justify-center border ${active ? "border-[#9fcbee] bg-[#c2def5]" : "border-transparent"}`}>
      {children}
    </button>
  );
}

const timeframes = ["M1", "M3", "M5", "M15", "M30", "H1", "H4", "H8", "D1", "W1", "MN"];
const menus = ["File", "View", "Insert", "Charts", "Tools", "Window", "Help"];

function Toolbar() {
  return (
    <div className="flex h-8 items-center border-t border-[#a0a0a0] bg-[#f0f0f0]" role="toolbar">
      <Grip />
      <div className="flex items-center gap-[2px]">
        <ToolButton label="Tile windows">
          <svg className="h-5 w-[21px]" viewBox="0 0 21 20" fill="none" shapeRendering="crispEdges">
            {[0, 11].map((x) => [0, 10].map((y) => (
              <g key={`${x}-${y}`}>
                <rect x={x + 0.5} y={y + 0.5} width="9" height="8" fill="#fff" stroke="#2272b8" />
                <rect x={x} y={y} width="10" height="2" fill="#2b86d4" />
              </g>
            )))}
            <path d="M2 6l2-1l2 2l2-2M13 7l2-1l2-2M2 17l2-2l2 1l2-2M13 14l2 2l3 0" stroke="#2ea02e" strokeWidth="1.500" />
          </svg>
        </ToolButton>
        <ToolButton label="Candlesticks" active>
          <svg className="size-[22px]" viewBox="0 0 22 22" fill="none">
            <path d="M4 1v20M1 18h20M2 3l2-2l2 2M19 16l2 2l-2 2" stroke="#24568c" strokeWidth="1.500" />
            <path d="M9 3v13M16 5v12" stroke="#3a9a2c" strokeWidth="1.500" />
            <rect x="7.500" y="5.500" width="3" height="8" fill="#dff2cf" stroke="#3a9a2c" />
            <rect x="14.500" y="8.500" width="3" height="6" fill="#dff2cf" stroke="#3a9a2c" />
          </svg>
        </ToolButton>
        <ToolButton label="Line chart">
          <svg className="size-[22px]" viewBox="0 0 22 22" fill="none">
            <path d="M3 1v20M1 18h20M1 3l2-2l2 2M19 16l2 2l-2 2" stroke="#24568c" strokeWidth="1.500" />
            <path d="M5 13l5-6l5 6l5-6" stroke="#3a9a2c" strokeWidth="2" />
          </svg>
        </ToolButton>
        <ToolButton label="Indicators">
          <svg className="size-[22px]" viewBox="0 0 22 22" fill="none">
            <path d="M7.500 1.500h13v10h-13z" fill="#fff" stroke="#2b86d4" />
            <path d="M7 2.500h14" stroke="#2b86d4" strokeWidth="2" />
            <path d="M9 7l3-1l3 1l4-2" stroke="#3a9a2c" strokeWidth="1.500" />
            <path d="M1.500 8.500h14v12h-14z" fill="#fff" stroke="#2b86d4" />
            <path d="M1 9.500h15" stroke="#2b86d4" strokeWidth="2" />
            <path d="M3 17l3-2l3 3l5-5" stroke="#3a9a2c" strokeWidth="1.500" />
          </svg>
        </ToolButton>
      </div>
      <svg className="h-2 w-2" viewBox="0 0 8 8" aria-hidden="true"><path d="M0 1h8l-4 5z" fill="#222" /></svg>
      <div className="mx-1 h-[26px] w-px bg-[#909090]" />
      <div className="flex items-center gap-[2px]">
        {["Zoom in", "Zoom out"].map((z, i) => (
          <ToolButton key={z} label={z}>
            <svg className="size-[22px]" viewBox="0 0 22 22" fill="none">
              <path d="M11 12l6 7" stroke="#1d4fa8" strokeWidth="3" />
              <circle cx="8" cy="7" r="5.500" fill="#eaf5ff" stroke="#2b62b8" strokeWidth="1.500" />
              <path d={i ? "M5 7h6" : "M5 7h6M8 4v6"} stroke="#2b62b8" strokeWidth="1.500" />
            </svg>
          </ToolButton>
        ))}
        <ToolButton label="Data window">
          <svg className="size-[22px]" viewBox="0 0 22 22" fill="none" shapeRendering="crispEdges">
            <rect x="10.500" y="1.500" width="9" height="10" fill="#fff" stroke="#2b86d4" />
            <path d="M15 3v2M15 6v4" stroke="#1d4fa8" strokeWidth="2" />
            <path d="M1 14.500h6M11 14.500h5M8.500 8v5M8.500 16v5" stroke="#557aa0" />
          </svg>
        </ToolButton>
        <ToolButton label="One click trading">
          <svg className="size-[22px]" viewBox="0 0 22 22" fill="none">
            <rect x="1.500" y="1.500" width="19" height="19" fill="#eef6fd" stroke="#2b86d4" />
            <rect x="1" y="1" width="20" height="3" fill="#2b86d4" />
            <path d="M8 5l5 5h-3v5h-4v-5h-3z" fill="#4fb83a" stroke="#2a7a1e" strokeWidth="0.500" />
            <path d="M14 19l5-5h-3v-5h-4v5h-3z" fill="#f0642c" stroke="#b43c12" strokeWidth="0.500" />
          </svg>
        </ToolButton>
      </div>
      <div className="ml-[2px] h-[30px] w-px bg-[#909090]" />
      <Grip />
      <div className="flex items-center gap-[2px] pl-px font-['DejaVu_Sans_Condensed','DejaVu_Sans',sans-serif] text-[11px] text-[#444]">
        {timeframes.map((t) => (
          <button key={t} aria-pressed={t === "H4"} className={`h-[26px] w-[30px] border text-center ${t === "H4" ? "border-[#9fcbee] bg-[#c2def5]" : "border-transparent"}`}>
            {t}
          </button>
        ))}
      </div>
      <div className="ml-[2px] h-[30px] w-px bg-[#909090]" />
      <Grip />
      <div className="flex items-center gap-[2px] pl-px text-[#555]">
        <ToolButton label="Cursor" active>
          <svg className="h-4 w-3" viewBox="0 0 12 16"><path d="M2 2v10l2.500-2l2 4l2-1l-2-4h3.500z" fill="#fff" stroke="#444" strokeWidth="1.300" /></svg>
        </ToolButton>
        <ToolButton label="Crosshair">
          <svg className="size-5" viewBox="0 0 20 20" stroke="currentColor" strokeWidth="2" shapeRendering="crispEdges"><path d="M0 10h7M13 10h7M10 0v7M10 13v7M9 10h2" /></svg>
        </ToolButton>
        <ToolButton label="Horizontal line">
          <svg className="size-[14px]" viewBox="0 0 14 14" stroke="currentColor" strokeWidth="2" shapeRendering="crispEdges"><path d="M0 7h14" /></svg>
        </ToolButton>
        <ToolButton label="Vertical line">
          <svg className="size-[14px]" viewBox="0 0 14 14" stroke="currentColor" strokeWidth="2" shapeRendering="crispEdges"><path d="M7 0v14" /></svg>
        </ToolButton>
        <ToolButton label="Trend line">
          <svg className="size-[14px]" viewBox="0 0 14 14" stroke="currentColor" strokeWidth="1.500"><path d="M1 13L13 1" /></svg>
        </ToolButton>
      </div>
      <div className="ml-[2px] h-[30px] w-px bg-[#909090]" />
      <div className="ml-auto flex items-center pr-[6px]">
        <button aria-label="Search" className="mr-[14px]">
          <svg className="size-[14px]" viewBox="0 0 14 14" fill="none">
            <circle cx="9" cy="5" r="4" fill="#eef6ff" stroke="#3355b4" strokeWidth="1.500" />
            <path d="M6 8l-5 5" stroke="#3355b4" strokeWidth="2.500" />
          </svg>
        </button>
        <button aria-label="3 messages" className="mr-[11px]">
          <svg className="h-5 w-6" viewBox="0 0 24 20" fill="none">
            <path d="M1 12c0-3 3-4 6-4s6 2 6 4s-3 4-6 4l-2 3v-3c-2 0-4-2-4-4z" fill="#f4f4f8" stroke="#9aa0b0" />
            <circle cx="15" cy="8" r="8" fill="#d8321f" />
            <text x="15" y="12" textAnchor="middle" fill="#fff" className="font-['Roboto',sans-serif] text-[11px] font-bold">3</text>
          </svg>
        </button>
        <div className="flex h-[15px] w-[42px] border border-[#8c8c8c] bg-[#d0d0d0]">
          <div className="w-[18px] bg-[#2fb32f]" />
        </div>
      </div>
    </div>
  );
}

const tabs = ["EURJPY,Monthly", "EURJPY,Weekly", "EURJPY,Daily", "EURJPY,H8", "EURJPY,H4", "EURJPY,H1", "EURJPY,M30", "EURJPY,M15", "EURJPY,M5"];

function ChartTabs() {
  return (
    <nav className="flex h-[21px] items-start border-t border-black bg-[#f0f0f0] pl-px text-[12px] text-[#777]">
      {tabs.map((t, i) => (
        <React.Fragment key={t}>
          <button className={`h-[19px] ${t === "EURJPY,H4" ? "-mt-px border-r-2 border-b-2 border-l border-black bg-white px-2 leading-[19px] text-black" : "px-[11px] leading-[18px]"}`}>{t}</button>
          {i !== 3 && i !== 4 && i !== 8 && <span className="mt-[3px] h-[13px] w-px bg-[#777]" />}
        </React.Fragment>
      ))}
      <div className="ml-auto flex h-[19px] items-center gap-4 pr-3">
        <button aria-label="Scroll tabs left"><svg className="h-[7px] w-1" viewBox="0 0 4 7"><path d="M4 0v7l-4-3.500z" fill="#888" /></svg></button>
        <button aria-label="Scroll tabs right"><svg className="h-[7px] w-1" viewBox="0 0 4 7"><path d="M0 0v7l4-3.500z" fill="#888" /></svg></button>
      </div>
    </nav>
  );
}

function StatusBar() {
  return (
    <footer className="flex h-[22px] items-center border-t border-white bg-[#f0f0f0] text-[11px] text-black">
      <p className="flex-1 pl-[2px]">For Help, press F1</p>
      <div className="flex h-[18px] items-center">
        <span className="flex h-full w-[128px] items-center border-l border-[#c4c4c4] pl-[5px]">EURJPY</span>
        <span className="h-full w-[98px] border-l border-[#c4c4c4]" />
        <span className="h-full w-[70px] border-l border-[#c4c4c4]" />
        <span className="h-full w-[71px] border-l border-[#c4c4c4]" />
        <span className="h-full w-[69px] border-l border-[#c4c4c4]" />
        <span className="h-full w-[69px] border-l border-[#c4c4c4]" />
        <span className="h-full w-[66px] border-l border-[#c4c4c4]" />
        <span className="flex h-full w-[122px] items-center gap-[5px] border-l border-[#c4c4c4] pl-[6px]">
          <svg className="size-4" viewBox="0 0 16 16" aria-hidden="true">
            <path d="M1 3c0-3 8-3 8 0v9c0 3-8 3-8 0z" fill="#3f9ee0" />
            <ellipse cx="5" cy="3" rx="4" ry="2" fill="#a8dcf8" />
            <rect x="7" y="5" width="8" height="10" rx="1" fill="#d6f0c0" stroke="#6aa84a" />
            <path d="M9 8h4M9 10h4M9 12h4" stroke="#4b8ac8" />
          </svg>
          1761 / 23 Kb
        </span>
      </div>
    </footer>
  );
}

function TaskButton({ label, open, active, children }: { label: string; open?: boolean; active?: boolean; children: React.ReactNode }) {
  return (
    <button aria-label={label} className={`flex h-10 w-[49px] items-center justify-center ${open ? "border-b-2 border-[#76b9ed]" : ""} ${active ? "bg-[#5c7078]" : ""}`}>
      {children}
    </button>
  );
}

function Taskbar() {
  return (
    <div className="flex h-10 items-center bg-linear-to-r from-[#21383f] via-[#20353f] to-[#1f2f44] text-white">
      <button aria-label="Start" className="flex h-10 w-12 items-center justify-center">
        <svg className="size-4" viewBox="0 0 16 16" fill="#fff"><path d="M0 2l7-1v6.500h-7zM8 1l8-1v7.500h-8zM0 8.500h7v6.500l-7-1zM8 8.500h8v7.500l-8-1z" /></svg>
      </button>
      <label className="flex h-10 w-[344px] items-center gap-[11px] border border-[#d4d4d4] bg-[#f2f2f2] pl-3">
        <svg className="h-5 w-4 shrink-0" viewBox="0 0 16 20" fill="none" stroke="#222" strokeWidth="1.500"><circle cx="10" cy="7" r="5" /><path d="M7 11l-6 7" /></svg>
        <input type="text" aria-label="Search" placeholder="Type here to search" className="w-full bg-transparent text-[14px] placeholder:text-[#444] focus:outline-none" />
      </label>
      <div className="flex items-center">
        <TaskButton label="Cortana">
          <svg className="size-[18px]" viewBox="0 0 18 18" fill="none" stroke="#fff" strokeWidth="2"><circle cx="9" cy="9" r="6.500" /></svg>
        </TaskButton>
        <TaskButton label="Resource Monitor">
          <svg className="size-6" viewBox="0 0 24 24">
            <path d="M1 4l14-2v13l-14 1z" fill="#c4ccd2" />
            <rect x="6" y="3" width="16" height="15" rx="1" fill="#e4eaee" stroke="#a4b0b8" />
            <rect x="8" y="5" width="12" height="10" fill="#f8fbff" />
            <path d="M8 13l2-4l2 3l2-6l2 6l2-2l2 3" fill="none" stroke="#3a78b8" strokeWidth="1.300" />
            <path d="M3 18h14l2 4h-14z" fill="#ccd4da" />
          </svg>
        </TaskButton>
        <TaskButton label="Paint">
          <svg className="size-6" viewBox="0 0 24 24">
            <path d="M2 13c0-5 5-8 10-7s7 4 6 7c-1 2-3 1-4 3s1 5-3 5c-5 0-9-3-9-8z" fill="#d7e6f2" stroke="#8fa9bd" />
            <circle cx="7" cy="11" r="2" fill="#3b86d8" /><circle cx="12" cy="9" r="1.700" fill="#e0b02c" />
            <circle cx="6" cy="16" r="1.700" fill="#58a83c" /><circle cx="11" cy="18" r="1.700" fill="#d8432c" />
            <path d="M21 1l-6 19" stroke="#c07a30" strokeWidth="2.500" /><path d="M21 0l-1 7" stroke="#e8c07c" strokeWidth="4" />
          </svg>
        </TaskButton>
        <TaskButton label="File Explorer">
          <svg className="size-6" viewBox="0 0 24 24">
            <path d="M1 3h8l2 2h12v16h-22z" fill="#e9b53c" /><path d="M1 7h22v14h-22z" fill="#fbdc7a" />
            <path d="M6 13h12v9h-3v-5h-6v5h-3z" fill="#3f93d8" />
          </svg>
        </TaskButton>
        <TaskButton label="Internet Explorer">
          <svg className="size-6" viewBox="0 0 24 24" fill="none">
            <path d="M19 16a7 7 0 1 1 1-4h-14" stroke="#36b0ec" strokeWidth="4" />
            <path d="M3 22c-5-3 3-15 11-19c7-4 9-1 7 3" stroke="#f2c42c" strokeWidth="2" />
          </svg>
        </TaskButton>
        <TaskButton label="Remote desktop">
          <svg className="size-6" viewBox="0 0 24 24">
            <path d="M5 2l18-1v15l-18 0z" fill="#4aa4e4" /><path d="M11 17h7l2 4h-9z" fill="#a8c8dc" />
            <circle cx="7" cy="14" r="5" fill="#9cccf0" stroke="#5a92c0" strokeWidth="1.500" /><path d="M4 18l-3 4" stroke="#5a92c0" strokeWidth="2.500" />
          </svg>
        </TaskButton>
        <TaskButton label="WhatsApp" open>
          <svg className="size-6" viewBox="0 0 24 24">
            <path d="M1 23l2-6a11 11 0 1 1 4 4z" fill="#fff" /><path d="M3 21l2-4a9 9 0 1 1 3 3z" fill="#2cb742" />
            <path d="M8 7c1-1 2 0 2 1l0 2c0 1 3 4 4 4l2-1c1 0 2 1 1 2c-2 3-6 1-8-1s-3-5-1-7z" fill="#fff" />
          </svg>
        </TaskButton>
        <TaskButton label="Chrome" open>
          <svg className="size-6" viewBox="0 0 24 24">
            <circle cx="12" cy="12" r="11" fill="#f2c42c" />
            <path d="M12 12L2.500 6.500A11 11 0 0 1 21.500 6.500z" fill="#dc4437" /><path d="M12 12L2.500 6.500A11 11 0 0 0 12 23z" fill="#2f9e54" />
            <circle cx="12" cy="12" r="5.500" fill="#fff" /><circle cx="12" cy="12" r="4.300" fill="#3f7fe4" />
          </svg>
        </TaskButton>
        <TaskButton label="MetaTrader 5" open active>
          <span className="flex h-6 w-6 flex-col items-center justify-center bg-linear-to-b from-[#3f86e0] to-[#1b4fae] font-['Roboto',sans-serif] font-bold text-white">
            <span className="text-[13px] leading-[13px]">FX</span>
            <span className="text-[6px] leading-[7px]">Choice</span>
          </span>
        </TaskButton>
      </div>
      <div className="ml-auto flex items-center">
        <button aria-label="Hidden icons" className="mr-[13px]"><svg className="h-2 w-3" viewBox="0 0 12 8" fill="none" stroke="#fff" strokeWidth="1.500"><path d="M1 7l5-5l5 5" /></svg></button>
        <button aria-label="Network" className="mr-[7px]">
          <svg className="size-[14px]" viewBox="0 0 14 14" fill="none" stroke="#fff" strokeWidth="1.300"><path d="M1 13A12 12 0 0 1 13 1M4.500 13A8 8 0 0 1 13 4.500M8 13A5 5 0 0 1 13 8" /><circle cx="12" cy="12" r="1" fill="#fff" /></svg>
        </button>
        <button aria-label="Volume" className="mr-2">
          <svg className="h-[14px] w-4" viewBox="0 0 16 14" fill="none" stroke="#fff"><path d="M1 5h2l4-4v12l-4-4h-2z" /><path d="M9 5a3 3 0 0 1 0 4M11 3a6 6 0 0 1 0 8M13 1a9 9 0 0 1 0 12" /></svg>
        </button>
        <button aria-label="Cloud backup" className="mr-[9px]">
          <svg className="h-3 w-4" viewBox="0 0 16 12"><path d="M4 12a4 4 0 0 1 0-7a5 5 0 0 1 9 0a3.500 3.500 0 0 1 0 7z" fill="#fff" /><path d="M8 10v-5M6 7l2-2l2 2" fill="none" stroke="#1f3040" strokeWidth="1.300" /></svg>
        </button>
        <div className="w-[54px] text-center text-[11px] leading-[18px]">
          <div className="whitespace-nowrap">10:04 PM</div>
          <div className="whitespace-nowrap">6/26/2020</div>
        </div>
        <button aria-label="5 notifications" className="mr-[18px] ml-4">
          <svg className="h-6 w-6" viewBox="0 0 24 24" fill="none">
            <path d="M2 4h15v12h-9l-3 3v-3h-3z" fill="#fff" /><path d="M5 7.500h9M5 10.500h9M5 13.500h5" stroke="#1f3040" />
            <circle cx="16" cy="16" r="7" fill="#2a3c50" stroke="#aab4c0" />
            <text x="16" y="20" textAnchor="middle" fill="#fff" className="font-['Open_Sans',sans-serif] text-[10px] font-bold">5</text>
          </svg>
        </button>
      </div>
    </div>
  );
}

export default function App() {
  return (
    <div className="flex min-h-screen flex-col bg-[#f0f0f0] font-['Open_Sans',sans-serif] text-[12px] text-black">
      <header className="flex h-[23px] items-center justify-between bg-white pr-5 pl-[2px]">
        <div className="flex items-center gap-[5px]">
          <span className="flex h-4 w-4 flex-col items-center justify-center bg-linear-to-b from-[#3f7fd6] to-[#173f9c] font-['Roboto',sans-serif] font-bold text-white">
            <span className="text-[9px] leading-[9px]">FX</span>
            <span className="text-[4px] leading-[4px]">Choice</span>
          </span>
          <h1 className="font-['Roboto','Open_Sans',sans-serif] text-[12px]">620275 - FXChoice-MetaTrader 5 Pro: Demo Account - Netting - EURJPY,H4</h1>
        </div>
        <div className="flex items-center gap-[35px]">
          <button aria-label="Minimize"><svg className="size-[11px]" viewBox="0 0 11 11" stroke="#000" shapeRendering="crispEdges"><path d="M0 5.500h11" /></svg></button>
          <button aria-label="Restore"><svg className="size-[11px]" viewBox="0 0 11 11" fill="none" stroke="#000" shapeRendering="crispEdges"><path d="M0.500 2.500h8v8h-8zM2.500 2v-1.500h8v8h-2" /></svg></button>
          <button aria-label="Close"><svg className="size-[11px]" viewBox="0 0 11 11" stroke="#000"><path d="M0 0l11 11M11 0l-11 11" /></svg></button>
        </div>
      </header>
      <nav className="flex h-5 items-center gap-5 pl-[11px] text-[12px]">
        {menus.map((m) => (
          <button key={m}>{m}</button>
        ))}
      </nav>
      <Toolbar />
      <main className="flex flex-1 flex-col border-t-2 border-[#6e6e6e] bg-[#ababab]">
        <div className="bg-[#f0f0f0] pr-px pl-px">
          <div className="grid grid-cols-2 border-l-2 border-[#6e6e6e]">
            <ChartWindow spec={monthly} />
            <ChartWindow spec={daily} />
            <ChartWindow spec={weekly} />
            <ChartWindow spec={h4} />
          </div>
        </div>
        <div className="flex pb-[3px] pl-[2px]">
          {[0, 1, 2, 3, 4].map((i) => (
            <div key={i} className="flex h-[27px] w-40 items-center justify-between border-y-2 border-r-2 border-[#6e6e6e] bg-[#f0f0f0] pr-[6px] pl-[9px]">
              <span className="flex items-center gap-[3px] text-[12px] text-[#777]">
                <ChartIcon />
                EURJPY,...
              </span>
              <WindowButtons restore tone="text-[#999]" gap="gap-[14px]" />
            </div>
          ))}
        </div>
      </main>
      <ChartTabs />
      <StatusBar />
      <Taskbar />
    </div>
  );
}
